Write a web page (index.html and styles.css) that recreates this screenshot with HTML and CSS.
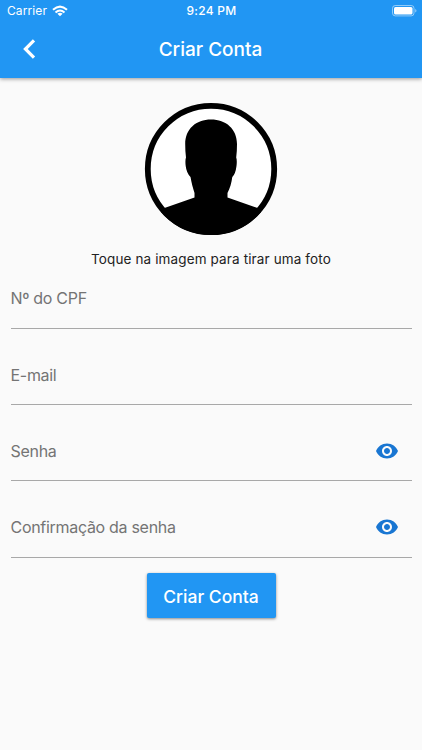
FILE: index.html
```html
<!DOCTYPE html>
<html lang="pt-BR">
<head>
<meta charset="utf-8">
<title>Criar Conta</title>
<link rel="stylesheet" href="styles.css">
</head>
<body>
<header class="top">
  <div class="status">
    <div class="carrier"><span>Carrier</span>
      <svg width="16" height="12" viewBox="0 0 16 12" fill="none" stroke="#fff" stroke-width="2"><path d="M1 4.800Q8-1.600 15 4.800M3.500 7.500Q8 3.500 12.500 7.500"/><path d="M8 11.300L5.400 8.800Q8 6.900 10.600 8.800Z" fill="#fff" stroke="none"/></svg>
    </div>
    <span class="time">9:24 PM</span>
    <svg class="battery" width="25" height="12" viewBox="0 0 25 12"><rect x=".5" y=".5" width="21.5" height="10.4" rx="2.8" fill="none" stroke="#fff" stroke-opacity=".5"/><rect x="2" y="2" width="18.5" height="7.4" rx="1.5" fill="#fff"/><path d="M23.200 4v3.600q1.300-.5 1.300-1.800T23.200 4" fill="#fff" fill-opacity=".5"/></svg>
  </div>
  <nav class="bar">
    <svg class="back" width="13" height="20" viewBox="0 0 13 20"><path d="M11 1.400L2.400 10 11 18.600" fill="none" stroke="#fff" stroke-width="3.200"/></svg>
    <h1>Criar Conta</h1>
  </nav>
</header>
<main>
  <svg class="avatar" width="134" height="134" viewBox="0 0 134 134">
    <clipPath id="disc"><circle cx="67" cy="67" r="66"/></clipPath>
    <circle cx="67" cy="67" r="63.2" fill="#fff" stroke="#000" stroke-width="5.8"/>
    <path clip-path="url(#disc)" d="M67 17.500C82 17.500 93 27 93 42Q93 50 92.200 55.500Q93.200 58 92.500 64Q91.500 72 88.300 75C87.500 81 86 86 83.500 91V95.500L115 106.500L134 134H0L19 106.500L50.500 95.500V91C49 86 47.500 81 46.500 75Q42.500 71 41.700 64Q41 58 42 55.500Q41.200 50 41.200 42C41.200 27 52 17.500 67 17.500Z"/>
  </svg>
  <p class="hint">Toque na imagem para tirar uma foto</p>
  <form>
    <div class="field"><label>Nº do CPF</label></div>
    <div class="field"><label>E-mail</label></div>
    <div class="field"><label>Senha</label>
      <svg class="eye" width="24" height="24" viewBox="0 0 24 24"><path d="M12 4.500C7 4.500 2.730 7.610 1 12c1.730 4.390 6 7.500 11 7.500s9.270-3.110 11-7.500c-1.730-4.390-6-7.500-11-7.500zM12 17c-2.760 0-5-2.240-5-5s2.240-5 5-5 5 2.240 5 5-2.240 5-5 5zm0-8c-1.660 0-3 1.340-3 3s1.340 3 3 3 3-1.340 3-3-1.340-3-3-3z"/></svg></div>
    <div class="field"><label>Confirmação da senha</label>
      <svg class="eye" width="24" height="24" viewBox="0 0 24 24"><path d="M12 4.500C7 4.500 2.730 7.610 1 12c1.730 4.390 6 7.500 11 7.500s9.270-3.110 11-7.500c-1.730-4.390-6-7.500-11-7.500zM12 17c-2.760 0-5-2.240-5-5s2.240-5 5-5 5 2.240 5 5-2.240 5-5 5zm0-8c-1.660 0-3 1.340-3 3s1.340 3 3 3 3-1.340 3-3-1.340-3-3-3z"/></svg></div>
    <button type="button">Criar Conta</button>
  </form>
</main>
</body>
</html>
```
FILE: styles.css
```css
* { box-sizing: border-box; }
body {
  margin: 0;
  height: 750px;
  overflow: hidden;
  background: #fafafa;
  font-family: Inter, "Liberation Sans", sans-serif;
}
.top {
  height: 77.500px;
  background: #2196f3;
  color: #fff;
  box-shadow: 0 1px 4px rgba(0, 0, 0, .4);
}
.status {
  display: grid;
  grid-template-columns: 1fr auto 1fr;
  align-items: center;
  height: 21px;
  padding: 0 5px 0 7px;
}
.carrier {
  display: flex;
  align-items: center;
  gap: 5px;
  font-size: 12px;
  letter-spacing: .1px;
}
.time { margin-right: 1px; font-size: 12px; font-weight: 500; letter-spacing: .3px; }
.battery { justify-self: end; }
.bar {
  display: grid;
  grid-template-columns: 1fr auto 1fr;
  align-items: center;
  height: 56px;
}
.back { margin-left: 22.500px; }
h1 {
  margin: 2px 1px 0 0;
  font-size: 19px;
  font-weight: 500;
  line-height: 24px;
}
main { padding: 24.500px 10.500px 0; }
.avatar { display: block; margin: 0 auto; }
.hint {
  margin: 13px 0 0;
  height: 20px;
  line-height: 20px;
  text-align: center;
  white-space: nowrap;
  font-size: 13.500px;
  letter-spacing: .13px;
  color: #222;
}
form { display: flex; flex-direction: column; margin-top: -16.500px; }
.field {
  display: flex;
  align-items: flex-end;
  justify-content: space-between;
  height: 76.300px;
  padding-bottom: 18.600px;
  border-bottom: 1px solid #a8a8a8;
  color: #747474;
  font-size: 16px;
  line-height: 22px;
  letter-spacing: -.3px;
}
.eye { margin: 0 13px -1px 0; fill: #1976d2; }
button {
  align-self: center;
  width: 129px;
  height: 45px;
  margin: 15.300px 0 0;
  padding: 2px 0 0;
  border: 0;
  border-radius: 2px;
  background: #2196f3;
  box-shadow: 0 1px 3px rgba(0, 0, 0, .45);
  color: #fff;
  font: 500 17.500px Inter, "Liberation Sans", sans-serif;
}
```
